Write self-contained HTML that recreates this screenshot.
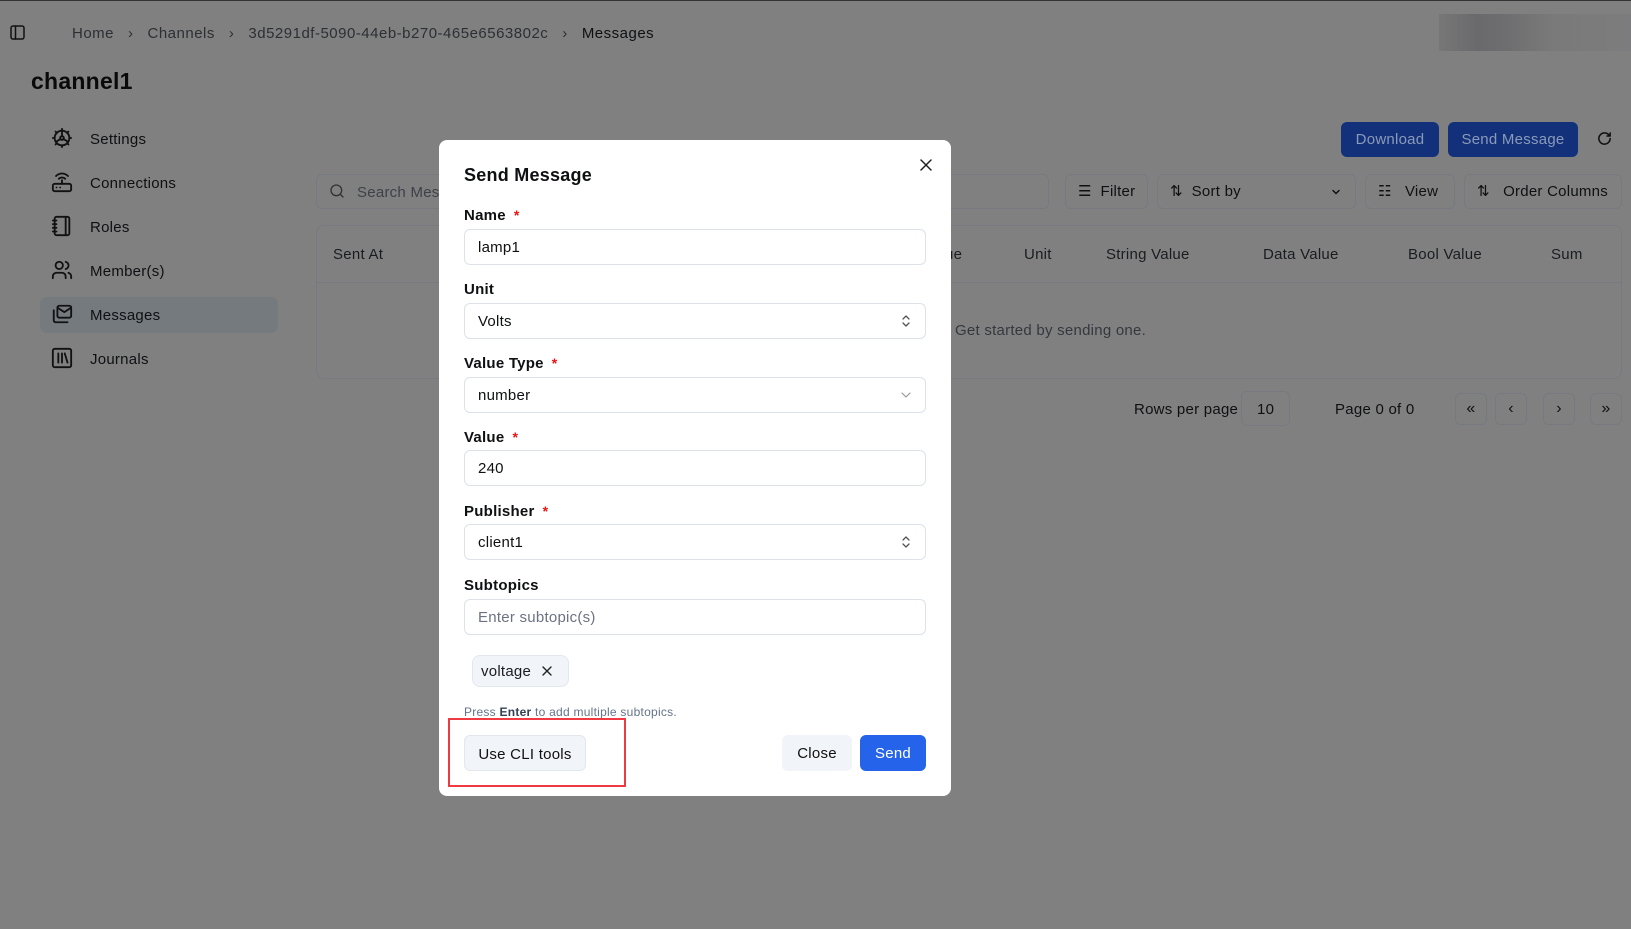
<!DOCTYPE html>
<html><head><meta charset="utf-8"><style>
*{box-sizing:border-box;margin:0;padding:0}
body{width:1631px;height:929px;overflow:hidden;background:#808080;font-family:"Liberation Sans",Arial,sans-serif;position:relative;color:#0f1012;letter-spacing:0.25px}
.a{position:absolute}
.t{position:absolute;white-space:nowrap;line-height:1;margin-top:1px}
svg{position:absolute;fill:none;stroke-linecap:round;stroke-linejoin:round}
.bx{position:absolute;border:1px solid #767a80;border-radius:6px}
.m{position:absolute;left:439px;top:140px;width:512px;height:656px;background:#fff;border-radius:8px}
.lb{position:absolute;left:25px;font-size:15px;font-weight:600;color:#0f1012;margin-top:1px}
.lb i{color:#e11;font-style:normal;margin-left:8px;font-size:14px}
.in{position:absolute;left:25px;width:462px;height:36px;border:1px solid #dde1e8;border-radius:6px;font-size:15px;padding-left:13px;line-height:36px;color:#0f1012}
.btn{position:absolute;border-radius:6px;font-size:15px;text-align:center;line-height:37px;height:36px}
</style></head><body>
<div class="a" style="left:0;top:0;width:1631px;height:1px;background:#333"></div>
<svg style="left:10px;top:25px" width="15" height="15" viewBox="0 0 15 15" stroke="#111" stroke-width="1.5"><rect x="1" y="1" width="13" height="13" rx="2"/><line x1="5.5" y1="1" x2="5.5" y2="14"/></svg>
<div class="t" style="left:72px;top:25px;font-size:15px;color:#2c2f33;letter-spacing:0.5px">Home&nbsp;&nbsp;&nbsp;›&nbsp;&nbsp;&nbsp;Channels&nbsp;&nbsp;&nbsp;›&nbsp;&nbsp;&nbsp;3d5291df-5090-44eb-b270-465e6563802c&nbsp;&nbsp;&nbsp;›&nbsp;&nbsp;&nbsp;<span style="color:#0f1012">Messages</span></div>
<div class="a" style="left:1439px;top:14px;width:192px;height:37px;background:linear-gradient(90deg,#777 0,#6a6a6c 20%,#6e6e70 35%,#7a7a7a 60%,#7c7c7e 100%)"></div>
<div class="t" style="left:31px;top:69px;font-size:23px;font-weight:bold;color:#0a0a0a">channel1</div>
<div class="a" style="left:40px;top:297px;width:238px;height:36px;background:#757a7e;border-radius:7px"></div>
<svg style="left:51px;top:127px" width="22" height="22" viewBox="0 0 24 24" stroke="#111" stroke-width="2"><circle cx="12" cy="12" r="8"/><circle cx="12" cy="12" r="2"/><path d="M12 2v2M12 20v2M2 12h2M20 12h2M5 5l1.5 1.5M17.5 17.5L19 19M5 19l1.5-1.5M17.5 6.5L19 5M12 10V4M10.5 13l-5 3M13.5 13l5 3"/></svg>
<svg style="left:51px;top:171px" width="22" height="22" viewBox="0 0 24 24" stroke="#111" stroke-width="2"><rect x="2" y="14" width="20" height="8" rx="2"/><path d="M6 18h.01M10 18h.01M12 14v-4M8.5 8.5a5 5 0 0 1 7 0M5.5 5.5a9 9 0 0 1 13 0"/></svg>
<svg style="left:51px;top:215px" width="22" height="22" viewBox="0 0 24 24" stroke="#111" stroke-width="2"><rect x="4" y="2" width="16" height="20" rx="2"/><path d="M2 6h4M2 10h4M2 14h4M2 18h4M16 2v20"/></svg>
<svg style="left:51px;top:259px" width="22" height="22" viewBox="0 0 24 24" stroke="#111" stroke-width="2"><circle cx="9" cy="7" r="4"/><path d="M2 21v-2a4 4 0 0 1 4-4h6a4 4 0 0 1 4 4v2M16 3.1a4 4 0 0 1 0 7.8M22 21v-2a4 4 0 0 0-3-3.9"/></svg>
<svg style="left:51px;top:303px" width="22" height="22" viewBox="0 0 24 24" stroke="#111" stroke-width="2"><rect x="7" y="3" width="15" height="13" rx="2"/><path d="M7 5l7.5 5L22 5M3 8v11a2 2 0 0 0 2 2h13"/></svg>
<svg style="left:51px;top:347px" width="22" height="22" viewBox="0 0 24 24" stroke="#111" stroke-width="2"><rect x="2" y="2" width="20" height="20" rx="2"/><path d="M8 7v10M12 7v10M15 7l3 10"/></svg>
<div class="t" style="left:90px;top:131px;font-size:15px">Settings</div>
<div class="t" style="left:90px;top:175px;font-size:15px">Connections</div>
<div class="t" style="left:90px;top:219px;font-size:15px">Roles</div>
<div class="t" style="left:90px;top:263px;font-size:15px">Member(s)</div>
<div class="t" style="left:90px;top:307px;font-size:15px">Messages</div>
<div class="t" style="left:90px;top:351px;font-size:15px">Journals</div>

<div class="btn" style="left:1341px;top:122px;width:98px;height:35px;background:#12317a;color:#8b9ab8;line-height:36px">Download</div>
<div class="btn" style="left:1448px;top:122px;width:130px;height:35px;background:#12317a;color:#8b9ab8;line-height:36px">Send Message</div>
<svg style="left:1597px;top:131px" width="15" height="15" viewBox="0 0 24 24" stroke="#111" stroke-width="2.5"><path d="M21 12a9 9 0 1 1-3-6.7L21 8M21 3v5h-5"/></svg>

<div class="bx" style="left:316px;top:174px;width:733px;height:35px"></div>
<svg style="left:329px;top:183px" width="16" height="16" viewBox="0 0 24 24" stroke="#333" stroke-width="2"><circle cx="11" cy="11" r="8"/><path d="M21 21l-4.3-4.3"/></svg>
<div class="t" style="left:357px;top:184px;font-size:15px;color:#3d4148">Search Mess</div>
<div class="bx" style="left:1065px;top:174px;width:83px;height:35px"></div>
<div class="t" style="left:1078px;top:183px;font-size:15px">☰&nbsp;&nbsp;Filter</div>
<div class="bx" style="left:1157px;top:174px;width:199px;height:35px"></div>
<div class="t" style="left:1170px;top:183px;font-size:15px">⇅&nbsp;&nbsp;Sort by</div>
<svg style="left:1330px;top:186px" width="12" height="12" viewBox="0 0 24 24" stroke="#111" stroke-width="3"><path d="M6 9l6 6 6-6"/></svg>
<div class="bx" style="left:1365px;top:174px;width:90px;height:35px"></div>
<div class="t" style="left:1378px;top:183px;font-size:15px">☷&nbsp;&nbsp;&nbsp;View</div>
<div class="bx" style="left:1464px;top:174px;width:158px;height:35px"></div>
<div class="t" style="left:1477px;top:183px;font-size:15px">⇅&nbsp;&nbsp;&nbsp;Order Columns</div>

<div class="bx" style="left:316px;top:225px;width:1306px;height:154px;border-radius:8px"></div>
<div class="a" style="left:316px;top:282px;width:1306px;height:1px;background:#767a80"></div>
<div class="t" style="left:333px;top:246px;font-size:15px;color:#1a1c20">Sent At</div>
<div class="t" style="left:945px;top:246px;font-size:15px;color:#1a1c20">ue</div>
<div class="t" style="left:1024px;top:246px;font-size:15px;color:#1a1c20">Unit</div>
<div class="t" style="left:1106px;top:246px;font-size:15px;color:#1a1c20">String Value</div>
<div class="t" style="left:1263px;top:246px;font-size:15px;color:#1a1c20">Data Value</div>
<div class="t" style="left:1408px;top:246px;font-size:15px;color:#1a1c20">Bool Value</div>
<div class="t" style="left:1551px;top:246px;font-size:15px;color:#1a1c20">Sum</div>
<div class="t" style="left:955px;top:322px;font-size:15px;color:#34383e">Get started by sending one.</div>
<div class="t" style="left:1134px;top:401px;font-size:15px">Rows per page</div>
<div class="bx" style="left:1241px;top:391px;width:49px;height:35px"></div>
<div class="t" style="left:1257px;top:401px;font-size:15px">10</div>
<div class="t" style="left:1335px;top:401px;font-size:15px">Page 0 of 0</div>
<div class="bx" style="left:1455px;top:393px;width:32px;height:32px;text-align:center;line-height:30px;font-size:16px">«</div>
<div class="bx" style="left:1495px;top:393px;width:32px;height:32px;text-align:center;line-height:30px;font-size:16px">‹</div>
<div class="bx" style="left:1543px;top:393px;width:32px;height:32px;text-align:center;line-height:30px;font-size:16px">›</div>
<div class="bx" style="left:1590px;top:393px;width:32px;height:32px;text-align:center;line-height:30px;font-size:16px">»</div>

<div class="m">
<div class="t" style="left:25px;top:25px;font-size:18px;font-weight:bold">Send Message</div>
<svg style="left:481px;top:19px" width="12" height="12" viewBox="0 0 12 12" stroke="#222" stroke-width="1.5"><path d="M1 1l10 10M11 1L1 11"/></svg>
<div class="lb" style="top:66px">Name<i>*</i></div>
<div class="in" style="top:89px">lamp1</div>
<div class="lb" style="top:140px">Unit</div>
<div class="in" style="top:163px">Volts</div>
<svg style="left:461px;top:174px" width="12" height="14" viewBox="0 0 12 14" stroke="#555" stroke-width="1.3"><path d="M3 5l3-3 3 3M3 9l3 3 3-3"/></svg>
<div class="lb" style="top:214px">Value Type<i>*</i></div>
<div class="in" style="top:237px">number</div>
<svg style="left:461px;top:250px" width="12" height="10" viewBox="0 0 12 10" stroke="#999" stroke-width="1.2"><path d="M2 3l4 4 4-4"/></svg>
<div class="lb" style="top:288px">Value<i>*</i></div>
<div class="in" style="top:310px">240</div>
<div class="lb" style="top:362px">Publisher<i>*</i></div>
<div class="in" style="top:384px">client1</div>
<svg style="left:461px;top:395px" width="12" height="14" viewBox="0 0 12 14" stroke="#555" stroke-width="1.3"><path d="M3 5l3-3 3 3M3 9l3 3 3-3"/></svg>
<div class="lb" style="top:436px">Subtopics</div>
<div class="in" style="top:459px;color:#6b7280">Enter subtopic(s)</div>
<div class="a" style="left:33px;top:515px;width:97px;height:32px;background:#f1f4f8;border:1px solid #e2e7ee;border-radius:8px"></div>
<div class="t" style="left:42px;top:523px;font-size:15px;color:#1a1c20">voltage</div>
<svg style="left:103px;top:526px" width="10" height="10" viewBox="0 0 10 10" stroke="#222" stroke-width="1.4"><path d="M1 1l8 8M9 1L1 9"/></svg>
<div class="t" style="left:25px;top:565px;font-size:12px;color:#64748b">Press <b style="color:#334155">Enter</b> to add multiple subtopics.</div>
<div class="btn" style="left:25px;top:595px;width:122px;background:#f1f4f8;border:1px solid #e2e7ee;color:#111">Use CLI tools</div>
<div class="btn" style="left:343px;top:595px;width:70px;background:#f1f4f8;color:#111">Close</div>
<div class="btn" style="left:421px;top:595px;width:66px;background:#2563eb;color:#fff">Send</div>
</div>
<div class="a" style="left:448px;top:718px;width:178px;height:69px;border:2px solid #ef3a44"></div>
</body></html>
